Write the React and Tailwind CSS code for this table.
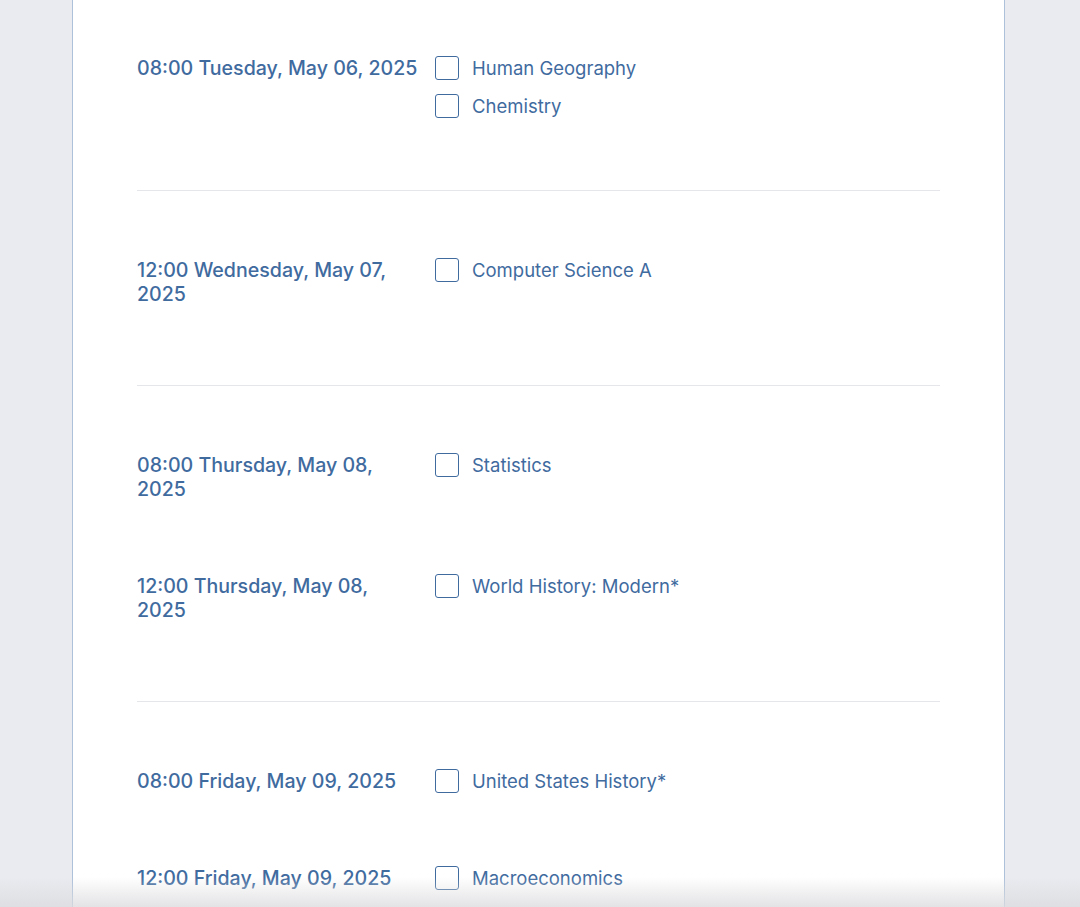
const schedule = [
  {
    rows: [{ date: '08:00 Tuesday, May 06, 2025', exams: ['Human Geography', 'Chemistry'] }],
  },
  {
    rows: [{ date: '12:00 Wednesday, May 07, 2025', exams: ['Computer Science A'] }],
  },
  {
    rows: [
      { date: '08:00 Thursday, May 08, 2025', exams: ['Statistics'] },
      { date: '12:00 Thursday, May 08, 2025', exams: ['World History: Modern*'] },
    ],
  },
  {
    rows: [
      { date: '08:00 Friday, May 09, 2025', exams: ['United States History*'] },
      { date: '12:00 Friday, May 09, 2025', exams: ['Macroeconomics'] },
    ],
  },
];

function ExamCheck({ label }) {
  return (
    <label className="flex h-6 items-center gap-[13px]">
      <span className="h-6 w-6 shrink-0 rounded-[3px] border-[1.5px] border-[#3f6b9f] bg-white" />
      <span className="text-[18.5px] leading-6 text-[#3f6b9f]">{label}</span>
    </label>
  );
}

export default function App() {
  return (
    <div
      className="relative h-[907px] overflow-hidden bg-[#e9ebf0]"
      style={{ fontFamily: 'Inter, "Noto Sans", sans-serif' }}
    >
      <div className="ml-[72px] min-h-full w-[933px] border-x border-[#adc1da] bg-white px-16">
        {schedule.map((section, i) => (
          <section
            key={i}
            className={
              i === 0
                ? 'pt-[19px] pb-[36px]'
                : 'border-t border-[#e4e6ea] pt-[30.5px] pb-[42.5px]'
            }
          >
            {section.rows.map((row) => (
              <div key={row.date} className="flex items-start py-[36.5px]">
                <div className="mr-4 w-[282px] shrink-0 text-[19.6px] leading-6 font-medium text-[#3f6b9f]">
                  {row.date}
                </div>
                <div className="flex flex-col gap-[14px]">
                  {row.exams.map((exam) => (
                    <ExamCheck key={exam} label={exam} />
                  ))}
                </div>
              </div>
            ))}
          </section>
        ))}
      </div>
      <div className="pointer-events-none absolute inset-x-0 bottom-0 h-[30px] bg-gradient-to-b from-white/0 to-[#dcdcdf]/80" />
    </div>
  );
}
